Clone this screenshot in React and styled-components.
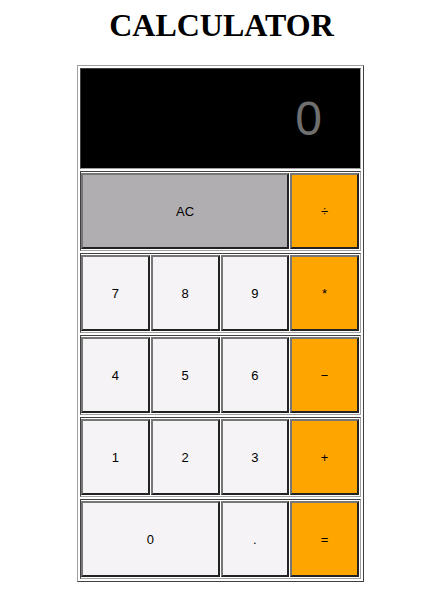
import React, { useState } from "react";
import styled, { createGlobalStyle } from "styled-components";

const GlobalStyle = createGlobalStyle`
  body {
    margin: 7px 8px 8px;
    background: #ffffff;
    font-family: "Liberation Serif", "Times New Roman", serif;
  }
`;

const Title = styled.h1`
  margin: 0 0 21px;
  padding-right: 4px;
  font-size: 32px;
  font-weight: bold;
  text-align: center;
  color: #000;
`;

const Frame = styled.div`
  width: 281px;
  margin-left: 69px;
  padding: 2px;
  border: 1px solid;
  border-color: #a0a0a0 #404040 #404040 #a0a0a0;
  display: flex;
  flex-direction: column;
  gap: 2px;
`;

const Cell = styled.div`
  border: 1px solid;
  border-color: #404040 #a0a0a0 #a0a0a0 #404040;
  padding: ${(p) => (p.$display ? "0" : "1px 0")};
`;

const Screen = styled.div`
  height: 99px;
  background: #000;
  display: flex;
  align-items: center;
  justify-content: flex-end;
  padding-right: 38px;
  font-family: "Liberation Sans", Arial, sans-serif;
  font-size: 48px;
  color: #6f6f6f;
`;

const Keys = styled.div`
  display: grid;
  grid-template-columns: repeat(4, 1fr);
  column-gap: 1px;
  width: 278px;
`;

const Key = styled.button`
  grid-column: span ${(p) => p.$span || 1};
  height: 76px;
  margin: 0;
  padding: 0;
  border: 2px solid;
  border-color: #767676 #222 #222 #767676;
  background: ${(p) =>
    p.$kind === "op" ? "#ffa500" : p.$kind === "clear" ? "#b0aeb0" : "#f5f3f5"};
  font-family: "Liberation Sans", Arial, sans-serif;
  font-size: 13px;
  color: #000;
  cursor: pointer;
`;

const rows = [
  [
    { label: "AC", kind: "clear", span: 3 },
    { label: "÷", kind: "op" },
  ],
  [
    { label: "7" },
    { label: "8" },
    { label: "9" },
    { label: "*", kind: "op" },
  ],
  [
    { label: "4" },
    { label: "5" },
    { label: "6" },
    { label: "−", kind: "op" },
  ],
  [
    { label: "1" },
    { label: "2" },
    { label: "3" },
    { label: "+", kind: "op" },
  ],
  [
    { label: "0", span: 2 },
    { label: "." },
    { label: "=", kind: "op" },
  ],
];

export default function App() {
  const [value, setValue] = useState("0");

  const handleKey = (label) => {
    if (label === "AC") {
      setValue("0");
      return;
    }
    if (label === "=") {
      try {
        const expr = value.replace(/÷/g, "/").replace(/−/g, "-");
        // eslint-disable-next-line no-new-func
        setValue(String(Function(`return (${expr})`)()));
      } catch (e) {
        setValue("Error");
      }
      return;
    }
    setValue((v) => (v === "0" && label !== "." ? label : v + label));
  };

  return (
    <>
      <GlobalStyle />
      <Title>CALCULATOR</Title>
      <Frame>
        <Cell $display>
          <Screen>{value}</Screen>
        </Cell>
        {rows.map((row, i) => (
          <Cell key={i}>
            <Keys>
              {row.map((k) => (
                <Key
                  key={k.label}
                  $kind={k.kind}
                  $span={k.span}
                  onClick={() => handleKey(k.label)}
                >
                  {k.label}
                </Key>
              ))}
            </Keys>
          </Cell>
        ))}
      </Frame>
    </>
  );
}
